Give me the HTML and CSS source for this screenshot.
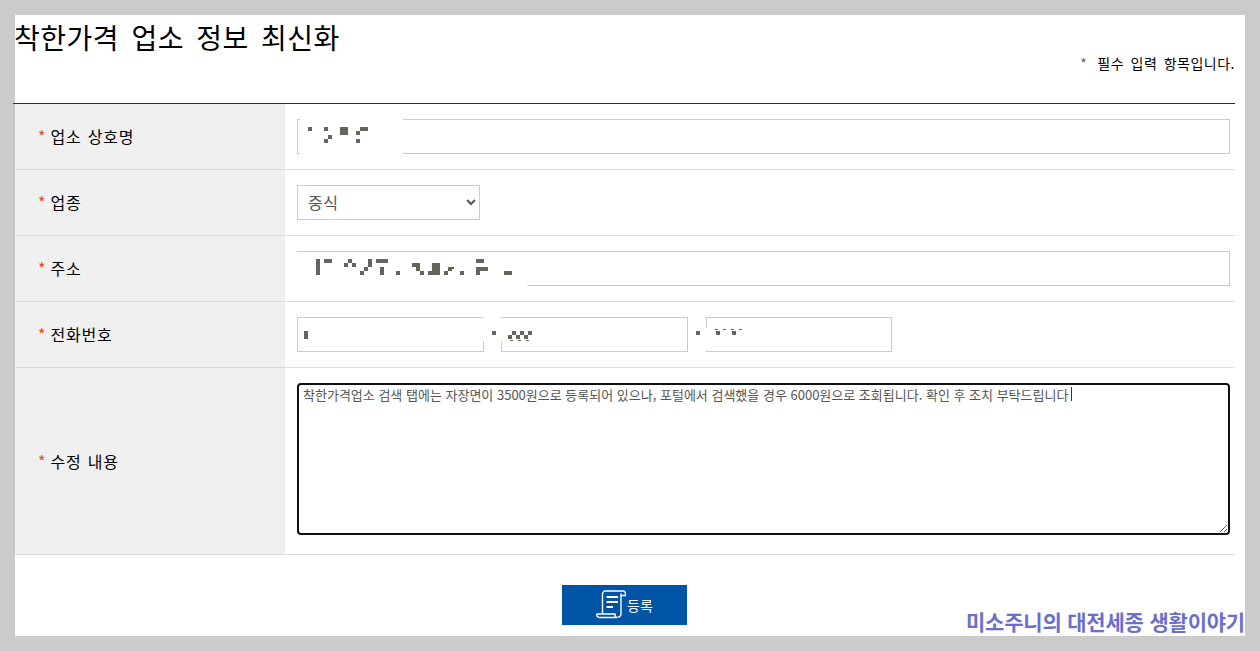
FILE: index.html
```html
<!DOCTYPE html>
<html lang="ko">
<head>
<meta charset="utf-8">
<title>착한가격 업소 정보 최신화</title>
<link rel="stylesheet" href="styles.css">
</head>
<body>
<main class="panel">
  <div class="content">
    <header class="head">
      <h1 class="title">착한가격 업소 정보 최신화</h1>
      <p class="note"><span class="note-star">*</span>필수 입력 항목입니다.</p>
    </header>
    <form class="form">
      <div class="row">
        <div class="label"><span class="req">*</span>업소 상호명</div>
        <div class="field"><input class="input" type="text"></div>
      </div>
      <div class="row">
        <div class="label"><span class="req">*</span>업종</div>
        <div class="field"><select class="select"><option>중식</option></select></div>
      </div>
      <div class="row">
        <div class="label"><span class="req">*</span>주소</div>
        <div class="field"><input class="input" type="text"></div>
      </div>
      <div class="row">
        <div class="label"><span class="req">*</span>전화번호</div>
        <div class="field phones">
          <input class="input phone" type="text">
          <input class="input phone" type="text">
          <input class="input phone" type="text">
        </div>
      </div>
      <div class="row">
        <div class="label label-tall"><span class="req">*</span>수정 내용</div>
        <div class="field field-tall"><textarea class="textarea">착한가격업소 검색 탭에는 자장면이 3500원으로 등록되어 있으나, 포털에서 검색했을 경우 6000원으로 조회됩니다. 확인 후 조치 부탁드립니다</textarea></div>
      </div>
      <div class="actions">
        <button class="submit" type="button">
          <svg class="submit-icon" width="30" height="30" viewBox="0 0 30 30" fill="none" stroke="#fff" stroke-width="1.4">
            <path d="M6.5 23.5V4a3 3 0 0 1 3-3H27a2.5 2.5 0 0 1 2.5 2.5V5.5H25"/>
            <path d="M25 3.5V23.5a3 3 0 0 1-3 3.5"/>
            <path d="M1 24H19v1a2.5 2.5 0 0 0 2.5 2.5H3.5A2.5 2.5 0 0 1 1 24z"/>
            <path d="M10.5 7H22M10.5 12H22M10.5 17H17" stroke-width="1.8"/>
          </svg>
          <span>등록</span>
        </button>
      </div>
    </form>
  </div>
</main>
<svg class="redact" width="1260" height="651" viewBox="0 0 1260 651" shape-rendering="crispEdges" aria-hidden="true">
  <g fill="#fff">
    <rect x="300" y="119" width="103" height="35"/>
    <rect x="297" y="252" width="230" height="36"/>
    <rect x="483" y="317" width="18" height="24"/>
    <rect x="501" y="318" width="2" height="23"/>
    <rect x="700" y="328" width="7" height="22"/>
  </g>
  <g fill="#67635d">
    <rect x="308" y="127" width="4" height="4"/><rect x="324" y="127" width="4" height="4"/>
    <rect x="328" y="135" width="4" height="4"/><rect x="324" y="139" width="4" height="4"/>
    <rect x="340" y="127" width="8" height="8"/><rect x="356" y="131" width="4" height="4"/>
    <rect x="360" y="127" width="8" height="4"/><rect x="356" y="139" width="4" height="4"/>

    <rect x="316" y="259" width="4" height="16"/><rect x="324" y="259" width="8" height="4"/>
    <rect x="348" y="259" width="4" height="4"/><rect x="344" y="263" width="4" height="4"/>
    <rect x="352" y="263" width="4" height="4"/><rect x="368" y="259" width="4" height="8"/>
    <rect x="364" y="267" width="4" height="4"/><rect x="360" y="271" width="4" height="4"/>
    <rect x="376" y="259" width="12" height="4"/><rect x="380" y="267" width="4" height="8"/>
    <rect x="396" y="271" width="4" height="4"/><rect x="412" y="263" width="8" height="4"/>
    <rect x="416" y="267" width="4" height="4"/><rect x="420" y="271" width="4" height="4"/>
    <rect x="428" y="271" width="12" height="4"/><rect x="432" y="263" width="8" height="8"/>
    <rect x="448" y="267" width="4" height="4"/><rect x="444" y="271" width="4" height="4"/>
    <rect x="452" y="267" width="2" height="2"/><rect x="460" y="271" width="4" height="4"/>
    <rect x="476" y="259" width="8" height="4"/><rect x="476" y="267" width="12" height="4"/>
    <rect x="476" y="271" width="4" height="4"/><rect x="504" y="271" width="8" height="4"/>

    <rect x="304" y="331" width="4" height="8"/><rect x="492" y="331" width="4" height="4"/>
    <rect x="508" y="335" width="4" height="4"/><rect x="512" y="331" width="4" height="4"/>
    <rect x="516" y="335" width="4" height="4"/><rect x="520" y="331" width="4" height="4"/>
    <rect x="524" y="335" width="4" height="4"/><rect x="528" y="331" width="4" height="4"/>
    <rect x="510" y="340" width="3" height="1"/><rect x="518" y="340" width="3" height="1"/>
    <rect x="526" y="340" width="3" height="1"/>

    <rect x="696" y="331" width="4" height="4"/>
    <rect x="715" y="329" width="3" height="1"/><rect x="723" y="329" width="3" height="1"/>
    <rect x="731" y="329" width="3" height="1"/><rect x="739" y="329" width="3" height="1"/>
    <rect x="716" y="331" width="4" height="4"/><rect x="732" y="331" width="4" height="4"/>
  </g>
  <rect x="1071" y="387" width="1" height="14" fill="#333"/>
</svg>
<div class="watermark">미소주니의 대전세종 생활이야기</div>
</body>
</html>
```
FILE: styles.css
```css
* { box-sizing: border-box; }

html, body {
  margin: 0;
  height: 651px;
  overflow: hidden;
}

body {
  position: relative;
  background: #cbcbcb;
  font-family: "Noto Sans CJK KR", "Noto Sans", sans-serif;
  color: #000;
}

.panel {
  margin: 15px 15px 15px 15px;
  height: 621px;
  background: #fff;
  padding-right: 10px;
}

.content {
  margin-left: -2px;
}

.head {
  height: 89px;
  border-bottom: 1px solid #1c2f55;
  padding-left: 1px;
  position: relative;
}

.title {
  margin: 0;
  font-size: 28px;
  font-weight: 400;
  line-height: 44px;
  letter-spacing: 0.5px;
  word-spacing: 4px;
}

.note {
  margin: -6px 0 0;
  font-size: 14px;
  line-height: 20px;
  text-align: right;
  letter-spacing: 0.5px;
  word-spacing: 2px;
}

.note-star {
  color: #666;
  margin-right: 10px;
}

.row {
  display: grid;
  grid-template-columns: 270px 1fr;
  border-left: 2px solid #c4c4c4;
  border-bottom: 1px solid #ddd;
}

.label {
  display: flex;
  align-items: center;
  padding: 0 0 2px 23px;
  background: #f0f0f0;
  font-size: 16px;
  letter-spacing: 0.8px;
  word-spacing: 1px;
}

.label-tall {
  padding-bottom: 0;
}

.req {
  color: #e8461c;
  width: 12.5px;
  letter-spacing: 0;
}

.field {
  padding: 15px 5px 15px 12px;
  display: flex;
}

.field-tall {
  padding-bottom: 19px;
}

.input {
  display: block;
  width: 100%;
  height: 35px;
  border: 1px solid #ccc;
  background: #fff;
  border-radius: 0;
  outline: 0;
}

.phones {
  gap: 17px;
}

.phone {
  width: 187px;
  flex: none;
}

.phone:last-child {
  width: 186px;
  margin-left: 1px;
}

.select {
  width: 183px;
  height: 35px;
  border: 1px solid #ccc;
  border-radius: 0;
  background-color: #fff;
  color: #555;
  font-family: inherit;
  font-size: 16px;
  padding: 0 0 2px 6px;
  letter-spacing: 0.5px;
}

.textarea {
  display: block;
  width: 100%;
  height: 152px;
  border: 2px solid #111;
  border-radius: 4px;
  padding: 1px 4px;
  outline: 0;
  background: #fff;
  color: #555;
  font-family: inherit;
  font-size: 13px;
  line-height: 18px;
}

.actions {
  display: flex;
  justify-content: center;
  margin-top: 30px;
}

.submit {
  width: 125px;
  height: 40px;
  display: flex;
  align-items: center;
  justify-content: center;
  padding: 0 0 0 1px;
  border: 0;
  background: #0054a6;
  color: #fff;
  font-family: inherit;
  font-size: 14px;
  letter-spacing: 0;
  gap: 1px;
}

.submit-icon {
  display: block;
  flex: none;
}

.redact {
  position: absolute;
  left: 0;
  top: 0;
  pointer-events: none;
}

.watermark {
  position: absolute;
  right: 15px;
  top: 606px;
  font-size: 21px;
  font-weight: 700;
  line-height: 30px;
  letter-spacing: -0.2px;
  color: #6b6fcb;
  white-space: nowrap;
}
```
